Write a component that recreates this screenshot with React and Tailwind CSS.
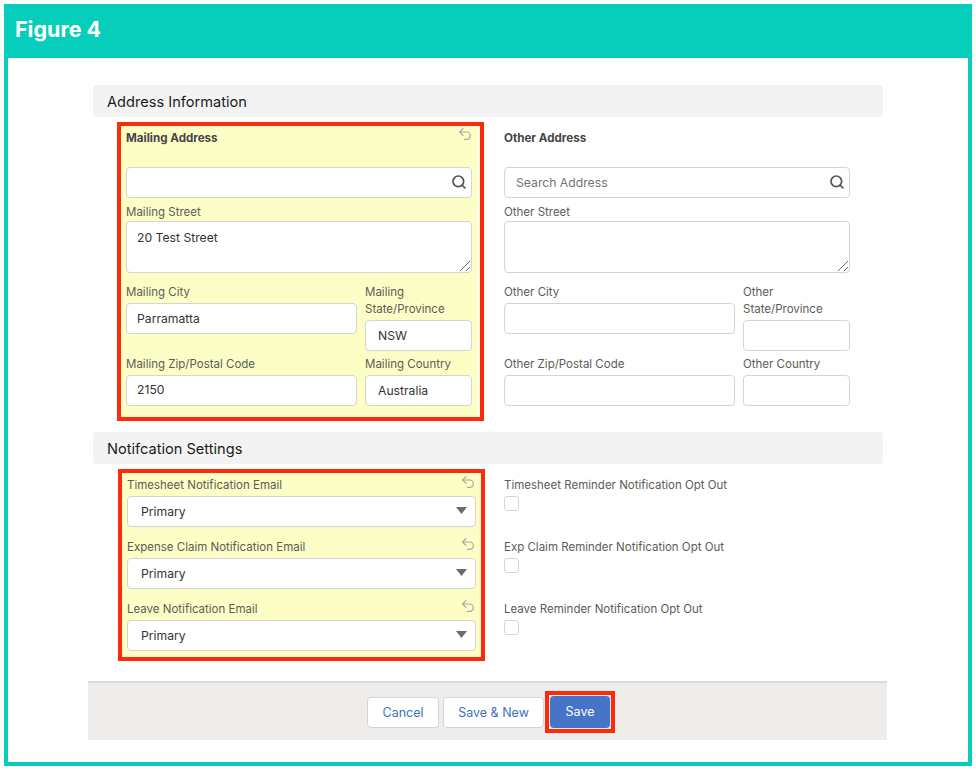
import React from 'react';
import { Search, Undo2 } from 'lucide-react';

const inputClass = 'w-full h-[31px] rounded border border-[#d4d4d2] bg-white text-[12.2px] text-[#333333] outline-none';

function Label({ children, className = '' }) {
  return <div className={`text-[11.5px] leading-[17px] text-[#5c5c58] ${className}`}>{children}</div>;
}

function UndoIcon() {
  return <Undo2 size={16} strokeWidth={1.8} className="text-[#a8a8a0] shrink-0" />;
}

function Field({ label, value, pad = 'pl-[10px]', inputPad = '' }) {
  return (
    <div className="flex flex-col justify-between">
      <Label className="mt-px -mb-px">{label}</Label>
      <input readOnly value={value} className={`${inputClass} ${pad} ${inputPad} mt-[3px]`} />
    </div>
  );
}

function AddressFields({ heading, prefix, placeholder, values = {}, changed }) {
  return (
    <div className="w-[346px] pt-[2px]">
      <div className="flex justify-between h-[17px]">
        <div className="pt-px text-[11.6px] leading-[17px] font-bold text-[#444444]">{heading}</div>
        {changed && <div className="-mt-[3px] -mr-px"><UndoIcon /></div>}
      </div>
      <div className="relative mt-[21px]">
        <input readOnly placeholder={placeholder} className={`${inputClass} h-[30px] pl-[11px] placeholder:text-[#74746f]`} />
        <Search size={16} strokeWidth={2.6} className="absolute right-[5px] top-[7px] text-[#555555]" />
      </div>
      <Label className="mt-[6px]">{prefix} Street</Label>
      <div className="relative">
        <textarea
          readOnly
          value={values.street || ''}
          className="block w-full h-[52px] resize-none rounded border border-[#d4d4d2] bg-white pl-[10px] pt-[7px] text-[12.2px] leading-[17px] text-[#333333] outline-none"
        />
        <svg width="12" height="12" viewBox="0 0 12 12" className="absolute right-[1px] bottom-[1px]" stroke="#555555" strokeWidth="0.9">
          <path d="M1 11 L11 1" />
          <path d="M7 11 L11 7" />
        </svg>
      </div>
      <div className="grid grid-cols-[231px_107px] gap-x-2 gap-y-1 mt-[10px]">
        <div>
          <Label className="mt-px -mb-px">{prefix} City</Label>
          <input readOnly value={values.city || ''} className={`${inputClass} pl-[10px] mt-[3px]`} />
        </div>
        <Field label={<>{prefix}<br />State/Province</>} value={values.state || ''} pad="pl-3" />
        <Field label={`${prefix} Zip/Postal Code`} value={values.zip || ''} inputPad="pb-[2px]" />
        <Field label={`${prefix} Country`} value={values.country || ''} pad="pl-3" />
      </div>
    </div>
  );
}

function SelectField({ label }) {
  return (
    <div>
      <div className="flex justify-between h-[17px]">
        <Label className="mt-px -mb-px">{label}</Label>
        <div className="-mt-[2px]"><UndoIcon /></div>
      </div>
      <div className="relative mt-[3px]">
        <select className={`${inputClass} appearance-none pl-[13px] pt-[2px]`} defaultValue="Primary">
          <option>Primary</option>
        </select>
        <svg width="11" height="7" viewBox="0 0 11 7" className="absolute right-[9px] top-[11px]">
          <path d="M0 0 H11 L5.5 7 Z" fill="#6b6b6b" />
        </svg>
      </div>
    </div>
  );
}

function OptOut({ label }) {
  return (
    <div>
      <Label className="mt-px -mb-px">{label}</Label>
      <div className="mt-[3px] w-[15px] h-[15px] rounded-[3px] border border-[#d4d4d2] bg-white" />
    </div>
  );
}

function SectionTitle({ children }) {
  return (
    <div className="ml-[5px] mr-1 h-8 flex items-center pl-[14px] pt-[3px] rounded bg-[#f3f3f3] text-[14.6px] text-[#1c1c1c]">
      {children}
    </div>
  );
}

export default function App() {
  return (
    <div className="w-[976px] h-[770px] bg-white pt-1 px-1" style={{ fontFamily: 'Inter, "Liberation Sans", sans-serif' }}>
      <div className="h-[762px] border-4 border-[#07cdbb] flex flex-col">
        <div className="h-[50px] shrink-0 bg-[#07cdbb] flex items-center pl-[7px] pb-[8px] text-white text-[21.5px] font-bold">
          Figure 4
        </div>

        <div className="ml-[80px] w-[799px] pt-[27px]">
          <SectionTitle>Address Information</SectionTitle>

          <div className="flex mt-[5px]">
            <div className="ml-[29px] w-[367px] h-[299px] border-4 border-[#ff2a0a] bg-[#fdfec6] shadow-[inset_-3px_0_0_#fefee6] pl-[5px] pt-px">
              <AddressFields
                heading="Mailing Address"
                prefix="Mailing"
                changed
                values={{ street: '20 Test Street', city: 'Parramatta', state: 'NSW', zip: '2150', country: 'Australia' }}
              />
            </div>
            <div className="ml-[20px] pt-[5px]">
              <AddressFields heading="Other Address" prefix="Other" placeholder="Search Address" />
            </div>
          </div>

          <div className="mt-[11px]">
            <SectionTitle>Notifcation Settings</SectionTitle>
          </div>

          <div className="flex mt-[5px]">
            <div className="ml-[30px] w-[367px] h-[192px] border-4 border-[#ff2a0a] bg-[#fdfec6] pl-[5px] pr-[5px] pt-[3px] flex flex-col gap-[11px]">
              <SelectField label="Timesheet Notification Email" />
              <SelectField label="Expense Claim Notification Email" />
              <SelectField label="Leave Notification Email" />
            </div>
            <div className="ml-[19px] pt-[7px] flex flex-col gap-[27px]">
              <OptOut label="Timesheet Reminder Notification Opt Out" />
              <OptOut label="Exp Claim Reminder Notification Opt Out" />
              <OptOut label="Leave Reminder Notification Opt Out" />
            </div>
          </div>

          <div className="mt-5 h-[59px] border-t-2 border-[#dcdcda] bg-[#eeedec] flex items-center pl-[279px] text-[12.5px]">
            <button className="mt-[2px] pt-[2px] w-[72px] h-[31px] rounded border border-[#d4d4d2] bg-white text-[#3f6fc4]">Cancel</button>
            <button className="mt-[2px] pt-[2px] ml-1 w-[101px] h-[31px] rounded border border-[#d4d4d2] bg-white text-[#3f6fc4]">Save &amp; New</button>
            <div className="ml-[1px] w-[70px] h-[42px] border-4 border-[#ff2a0a] p-[1px]">
              <button className="pt-[2px] w-full h-full rounded bg-[#4674c8] text-white">Save</button>
            </div>
          </div>
        </div>
      </div>
    </div>
  );
}
